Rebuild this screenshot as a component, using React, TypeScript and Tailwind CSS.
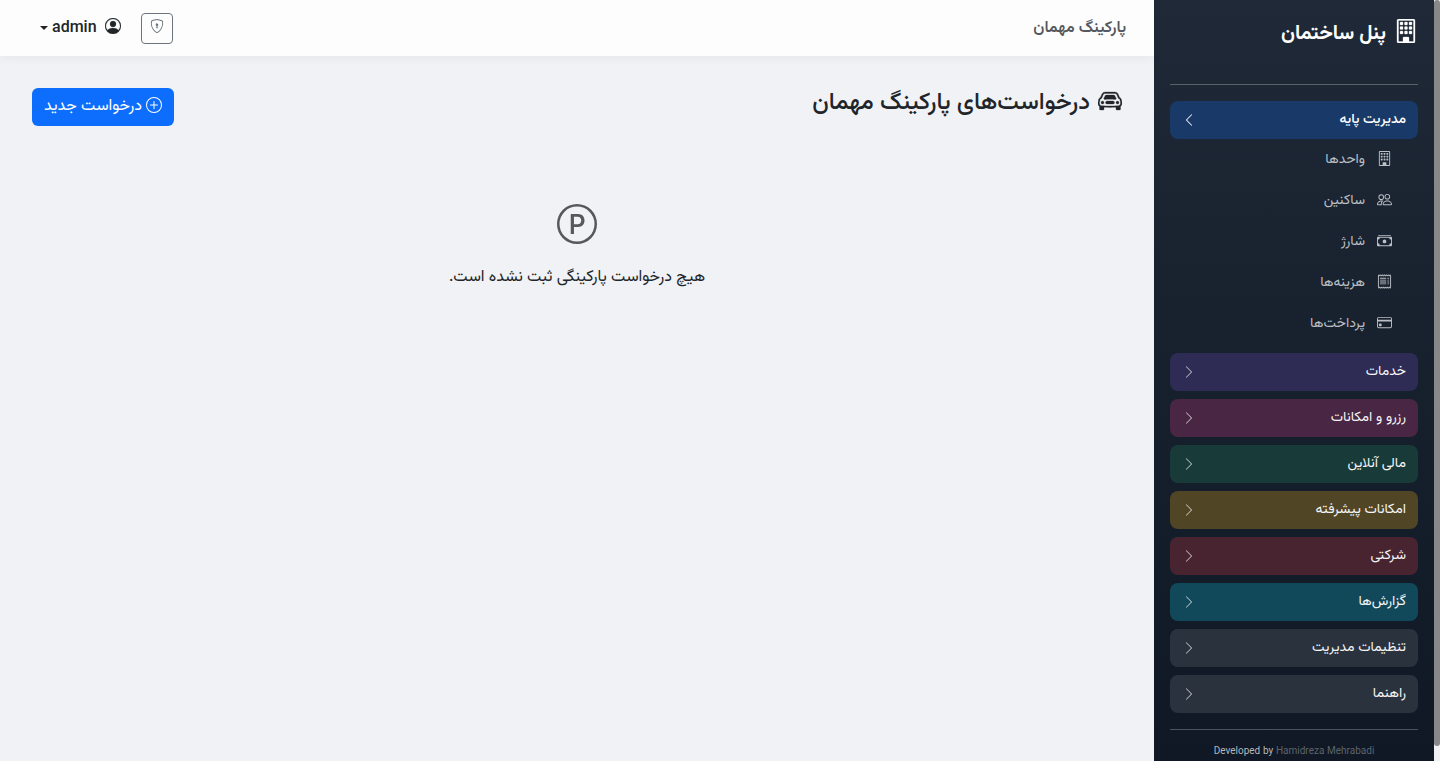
import React from "react";
import {
  BsBuilding,
  BsCarFront,
  BsCashStack,
  BsChevronLeft,
  BsChevronRight,
  BsCreditCard,
  BsPCircle,
  BsPeople,
  BsPersonCircle,
  BsPlusCircle,
  BsReceipt,
  BsShieldLock,
} from "react-icons/bs";

const baseLinks = [
  { label: "واحدها", icon: BsBuilding },
  { label: "ساکنین", icon: BsPeople },
  { label: "شارژ", icon: BsCashStack },
  { label: "هزینه‌ها", icon: BsReceipt },
  { label: "پرداخت‌ها", icon: BsCreditCard },
];

const groups = [
  { label: "خدمات", color: "bg-[#2e2b55]" },
  { label: "رزرو و امکانات", color: "bg-[#482644]" },
  { label: "مالی آنلاین", color: "bg-[#183a38]" },
  { label: "امکانات پیشرفته", color: "bg-[#504625]" },
  { label: "شرکتی", color: "bg-[#472430]" },
  { label: "گزارش‌ها", color: "bg-[#11495b]" },
  { label: "تنظیمات مدیریت", color: "bg-[#29323d]" },
  { label: "راهنما", color: "bg-[#29323d]" },
];

function Sidebar() {
  return (
    <aside className="w-[280px] shrink-0 bg-linear-to-b from-[#1f2937] to-[#0f1824] px-4 text-white">
      <a href="#" className="flex h-[84px] items-start gap-2 pt-[19px] text-xl font-bold">
        <BsBuilding className="size-6 stroke-[0.2]" />
        <span className="leading-[30px]">پنل ساختمان</span>
      </a>
      <hr className="mb-4 border-[#58606a]" />
      <nav>
        <button className="flex h-[38px] w-full items-center justify-between rounded-lg bg-[#193a69] px-3 text-sm font-medium">
          <span>مدیریت پایه</span>
          <BsChevronLeft className="size-3.5" />
        </button>
        <ul className="mb-[9px]">
          {baseLinks.map(({ label, icon: Icon }) => (
            <li key={label}>
              <a
                href="#"
                className="flex h-[41px] items-center gap-3 px-[26px] text-sm text-[#bcbfc3]"
              >
                <Icon className="mb-0.5 size-[15px]" />
                {label}
              </a>
            </li>
          ))}
        </ul>
        <div className="flex flex-col gap-2">
          {groups.map((group) => (
            <button
              key={group.label}
              className={`flex h-[38px] w-full items-center justify-between rounded-lg px-3 text-sm font-normal text-[#f5f5f6] ${group.color}`}
            >
              <span>{group.label}</span>
              <BsChevronRight className="size-3.5 text-white/70" />
            </button>
          ))}
        </div>
      </nav>
      <hr className="mt-4 mb-3 border-[#4b535d]" />
      <p dir="ltr" className="text-center text-[10px] leading-5 text-[#b5b8bc]">
        Developed by{" "}
        <a href="#" className="text-[#5d646d]">
          Hamidreza Mehrabadi
        </a>
      </p>
    </aside>
  );
}

function Topbar() {
  return (
    <header className="flex h-14 items-center justify-between bg-[#fdfdfd] ps-7 pe-10 shadow-[0_2px_10px_rgba(0,0,0,0.05)]">
      <span className="pt-0.5 font-semibold text-[#55585c]">پارکینگ مهمان</span>
      <div className="flex items-center gap-5">
        <button
          aria-label="امنیت"
          className="flex h-[31px] w-8 items-start justify-center rounded border border-[#6c757d] pt-[5px] text-[#6c757d]"
        >
          <BsShieldLock className="size-3.5" />
        </button>
        <button className="flex items-center gap-2 font-medium text-[#212529]">
          <BsPersonCircle className="mb-1 size-4 stroke-[0.2]" />
          <span className="flex items-center gap-1">
            <span className="pt-0.5">admin</span>
            <span className="border-x-4 border-t-4 border-x-transparent border-t-[#212529]" />
          </span>
        </button>
      </div>
    </header>
  );
}

export default function App() {
  return (
    <div
      dir="rtl"
      className="flex h-screen flex-row overflow-hidden bg-[#f0f2f6] font-[Vazirmatn,Roboto,'Noto_Sans','DejaVu_Sans',sans-serif] text-[#212529]"
    >
      <div className="w-1.5 shrink-0 bg-[#f1f1f1]">
        <div className="h-[98%] rounded-[3px] bg-[#888888]" />
      </div>
      <Sidebar />
      <div className="min-w-0 flex-1">
        <Topbar />
        <main className="p-8">
          <div className="flex items-start justify-between">
            <h1 className="flex items-center gap-2 text-2xl leading-[30px] font-medium">
              <BsCarFront className="mb-1 size-6 stroke-[0.2]" />
              درخواست‌های پارکینگ مهمان
            </h1>
            <button className="flex h-[38px] items-center gap-1 rounded-md bg-[#0d6efd] px-3 text-white">
              <BsPlusCircle className="mb-1 size-4" />
              درخواست جدید
            </button>
          </div>
          <div className="flex flex-col items-center pt-[78px]">
            <BsPCircle className="size-10 text-[#55585c]" />
            <p className="mt-[22px] leading-6">هیچ درخواست پارکینگی ثبت نشده است.</p>
          </div>
        </main>
      </div>
    </div>
  );
}
